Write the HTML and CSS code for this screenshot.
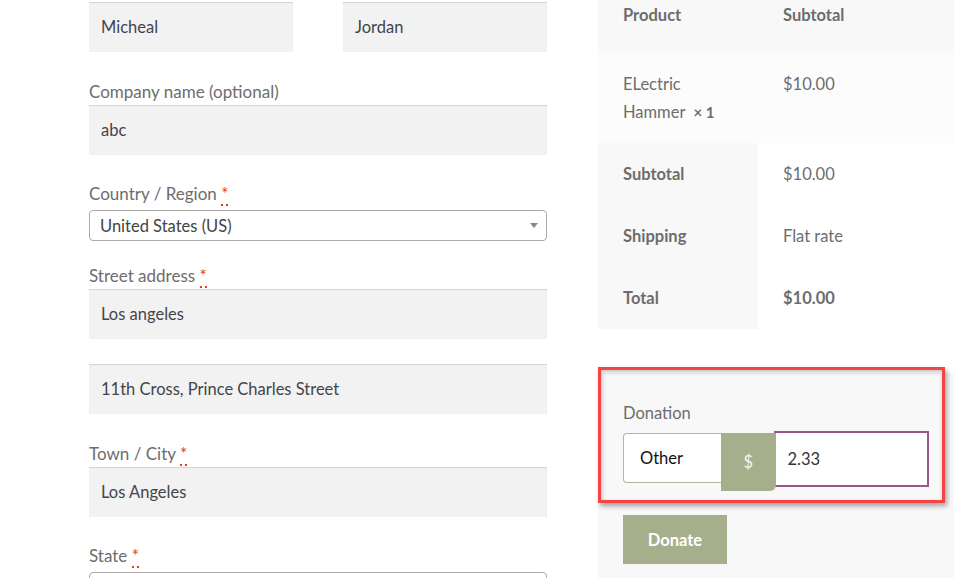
FILE: index.html
```html
<!DOCTYPE html>
<html lang="en">
<head>
    <meta charset="UTF-8">
    <meta name="viewport" content="width=device-width, initial-scale=1.0">
    <title>Checkout</title>
    <link rel="stylesheet" href="styles.css">
</head>
<body>

<div class="checkout">
    <div class="billing">
        <div class="field-row">
            <div class="field half">
                <div class="input">Micheal</div>
            </div>
            <div class="field half">
                <div class="input">Jordan</div>
            </div>
        </div>

        <div class="field">
            <label class="label">Company name (optional)</label>
            <div class="input">abc</div>
        </div>

        <div class="field field-select">
            <label class="label">Country / Region <abbr class="required">*</abbr></label>
            <div class="select">
                <span>United States (US)</span>
                <span class="arrow"></span>
            </div>
        </div>

        <div class="field">
            <label class="label">Street address <abbr class="required">*</abbr></label>
            <div class="input">Los angeles</div>
        </div>

        <div class="field field-street2">
            <div class="input">11th Cross, Prince Charles Street</div>
        </div>

        <div class="field">
            <label class="label">Town / City <abbr class="required">*</abbr></label>
            <div class="input">Los Angeles</div>
        </div>

        <div class="field field-select">
            <label class="label">State <abbr class="required">*</abbr></label>
            <div class="select select-empty">
                <span class="arrow"></span>
            </div>
        </div>
    </div>

    <div class="order">
        <table class="order-table">
            <thead>
                <tr>
                    <th>Product</th>
                    <th>Subtotal</th>
                </tr>
            </thead>
            <tbody>
                <tr class="item">
                    <td>ELectric Hammer&nbsp; <strong class="qty">&times;&nbsp;1</strong></td>
                    <td>$10.00</td>
                </tr>
            </tbody>
            <tfoot>
                <tr>
                    <th>Subtotal</th>
                    <td>$10.00</td>
                </tr>
                <tr>
                    <th>Shipping</th>
                    <td>Flat rate</td>
                </tr>
                <tr>
                    <th>Total</th>
                    <td><strong>$10.00</strong></td>
                </tr>
            </tfoot>
        </table>

        <div class="donation">
            <div class="highlight"></div>
            <div class="donation-label">Donation</div>
            <div class="donation-group">
                <div class="donation-choice">Other</div>
                <div class="donation-currency">$</div>
                <div class="donation-amount">2.33</div>
            </div>
            <button class="donate-btn">Donate</button>
        </div>
    </div>
</div>

</body>
</html>
```

FILE: styles.css
```css
html, body {
    height: 100%;
    overflow: hidden;
}

body {
    margin: 0;
    font-family: Lato, "Source Sans Pro", sans-serif;
    font-size: 16.5px;
    color: #6d6d6d;
    background: #fff;
}

.checkout {
    display: flex;
    padding-left: 89px;
}

/* billing form */

.billing {
    width: 458px;
    padding-top: 2px;
}

.field-row {
    display: flex;
    justify-content: space-between;
}

.field {
    margin-bottom: 25px;
}

.field.half {
    width: 204px;
    margin-bottom: 26px;
}

.field-select {
    margin-bottom: 21px;
}

.field-street2 {
    margin-bottom: 26px;
}

.label {
    display: block;
    line-height: 27px;
    font-size: 17px;
    color: #6d6d6d;
}

.required {
    color: #e2401c;
    text-decoration: none;
    border-bottom: 2px dotted #e2401c;
    line-height: 1;
}

.input {
    height: 50px;
    line-height: 50px;
    padding: 0 12px;
    background: #f2f2f2;
    color: #43454b;
    box-shadow: inset 0 1px 1px rgba(0, 0, 0, 0.13);
    box-sizing: border-box;
}

.field-select .label {
    margin-bottom: 3px;
}

.select {
    display: flex;
    justify-content: space-between;
    align-items: center;
    height: 31px;
    padding: 0 8px 0 10px;
    border: 1px solid #aaa;
    border-radius: 4px;
    background: #fff;
    color: #444;
    box-sizing: border-box;
}

.select-empty {
    justify-content: flex-end;
}

.arrow {
    width: 0;
    height: 0;
    border-left: 4px solid transparent;
    border-right: 4px solid transparent;
    border-top: 5px solid #888;
}

/* order review */

.order {
    width: 356px;
    margin-left: 51px;
}

.order-table {
    width: 100%;
    border-collapse: collapse;
    line-height: 28px;
}

.order-table th,
.order-table td {
    padding: 17px 25px;
    text-align: left;
    vertical-align: top;
}

.order-table th {
    font-weight: 700;
}

.order-table thead th {
    background: #f8f8f8;
    padding-top: 1px;
    padding-bottom: 23px;
}

.order-table thead th:first-child,
.order-table tfoot th {
    width: 110px;
}

.order-table .item td {
    background: #fcfcfc;
    padding-top: 18px;
}

.qty {
    font-weight: 700;
    font-size: 15px;
}

.order-table tfoot th {
    background: #f8f8f8;
}

.order-table tfoot td {
    background: #fff;
}

/* donation */

.donation {
    position: relative;
    margin-top: 44px;
    padding: 26px 25px 20px;
    background: #f8f8f8;
    height: 300px;
}

.highlight {
    position: absolute;
    top: -6px;
    left: 0;
    width: 347px;
    height: 136px;
    border: 3px solid #f44444;
    box-sizing: border-box;
    box-shadow: 2px 3px 5px rgba(0, 0, 0, 0.35), inset 1px 2px 4px rgba(0, 0, 0, 0.25);
    z-index: 5;
}

.donation-label {
    line-height: 28px;
    margin-bottom: 4px;
}

.donation-group {
    display: flex;
    align-items: flex-start;
}

.donation-choice {
    width: 100px;
    height: 50px;
    margin-top: 2px;
    padding-left: 16px;
    line-height: 48px;
    border: 1px solid #b3b89c;
    border-right: none;
    border-radius: 4px 0 0 4px;
    background: #fff;
    color: #111;
    box-sizing: border-box;
}

.donation-currency {
    position: relative;
    z-index: 2;
    width: 55px;
    height: 58px;
    margin-top: 2px;
    margin-left: -1px;
    line-height: 58px;
    text-align: center;
    background: #a6af8b;
    color: #f4f4f4;
    border-radius: 0 0 6px 0;
}

.donation-amount {
    width: 157px;
    height: 56px;
    margin-left: -2px;
    padding-left: 12px;
    line-height: 52px;
    border: 2px solid #96588a;
    background: #fff;
    color: #333;
    box-sizing: border-box;
}

.donate-btn {
    display: block;
    margin-top: 24px;
    width: 104px;
    height: 49px;
    border: none;
    background: #a6af8b;
    color: #fff;
    font-family: inherit;
    font-size: 16.5px;
    font-weight: 700;
    cursor: pointer;
}
```
